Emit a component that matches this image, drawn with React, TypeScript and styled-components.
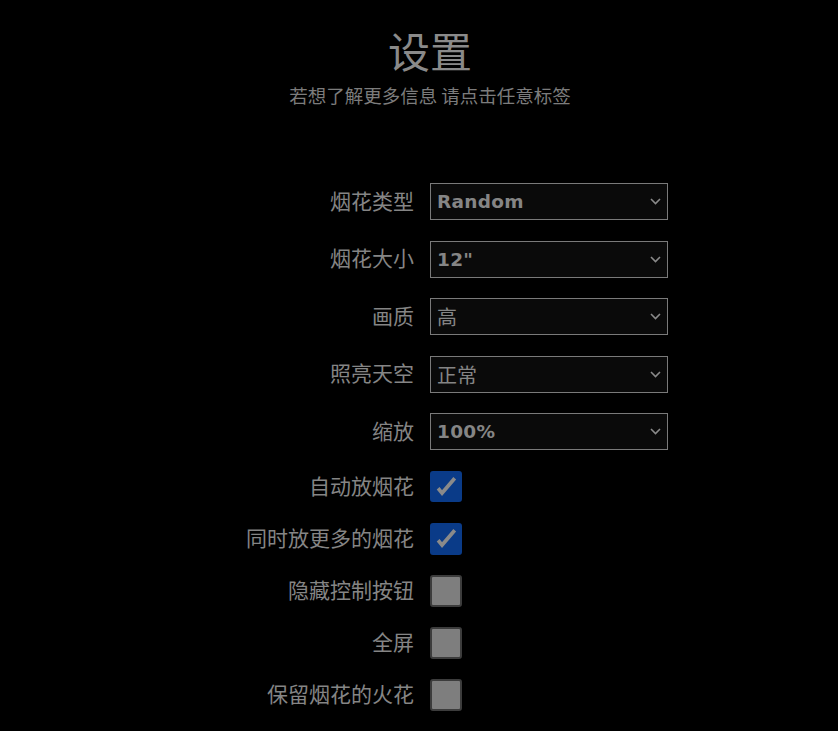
import React from "react";
import styled, { createGlobalStyle } from "styled-components";

const GlobalStyle = createGlobalStyle`
  html, body {
    margin: 0;
    padding: 0;
    background: #000;
  }
  body {
    font-family: "Noto Sans CJK SC", "Noto Sans", sans-serif;
    color: #858585;
  }
`;

const selects = [
  { label: "烟花类型", value: "Random", latin: true },
  { label: "烟花大小", value: '12"', latin: true },
  { label: "画质", value: "高", latin: false },
  { label: "照亮天空", value: "正常", latin: false },
  { label: "缩放", value: "100%", latin: true },
];

const toggles = [
  { label: "自动放烟花", checked: true },
  { label: "同时放更多的烟花", checked: true },
  { label: "隐藏控制按钮", checked: false },
  { label: "全屏", checked: false },
  { label: "保留烟花的火花", checked: false },
];

export default function App() {
  return (
    <>
      <GlobalStyle />
      <Page>
        <Header>
          <Title>设置</Title>
          <Subtitle>若想了解更多信息 请点击任意标签</Subtitle>
        </Header>
        <Form>
          {selects.map((s) => (
            <Row key={s.label}>
              <Label>{s.label}</Label>
              <Select>
                <SelectValue $latin={s.latin}>{s.value}</SelectValue>
                <svg width="11" height="7" viewBox="0 0 11 7">
                  <path d="M1 1 L5.5 5.5 L10 1" fill="none" stroke="#8a8a8a" strokeWidth="1.6" />
                </svg>
              </Select>
            </Row>
          ))}
          {toggles.map((t) => (
            <Row key={t.label}>
              <Label>{t.label}</Label>
              <Checkbox $checked={t.checked}>
                {t.checked && (
                  <svg width="32" height="31" viewBox="0 0 32 31">
                    <path
                      d="M7 17.5 L11.5 23 L26 6"
                      fill="none"
                      stroke="#8a8a8a"
                      strokeWidth="4.2"
                      strokeLinecap="butt"
                      strokeLinejoin="miter"
                    />
                  </svg>
                )}
              </Checkbox>
            </Row>
          ))}
        </Form>
      </Page>
    </>
  );
}

const Page = styled.div`
  width: 838px;
  min-height: 731px;
  background: #000;
`;

const Header = styled.header`
  display: flex;
  flex-direction: column;
  align-items: center;
  padding-top: 27px;
  padding-left: 22px;
`;

const Title = styled.h1`
  margin: 0;
  font-size: 42px;
  line-height: 46px;
  font-weight: 400;
  color: #8a8a8a;
`;

const Subtitle = styled.p`
  margin: 11px 0 0;
  font-size: 18.5px;
  line-height: 22px;
  color: #7c7c7c;
`;

const Form = styled.div`
  display: grid;
  grid-template-columns: 414px 238px;
  column-gap: 16px;
  row-gap: 20.6px;
  margin-top: 77px;
  align-items: center;
`;

const Row = styled.div`
  display: contents;
`;

const Label = styled.span`
  justify-self: end;
  font-size: 21px;
  line-height: 24px;
  padding-bottom: 4px;
  color: #858585;
`;

const Select = styled.div`
  box-sizing: border-box;
  height: 37px;
  display: flex;
  align-items: center;
  justify-content: space-between;
  padding: 0 6px;
  border: 1px solid #7a7a7a;
  background: #0a0a0a;
`;

const SelectValue = styled.span<{ $latin: boolean }>`
  font-family: ${(p) =>
    p.$latin ? '"DejaVu Sans", sans-serif' : '"Noto Sans CJK SC", sans-serif'};
  font-weight: ${(p) => (p.$latin ? 700 : 400)};
  font-size: ${(p) => (p.$latin ? "18.5px" : "20px")};
  letter-spacing: ${(p) => (p.$latin ? "0.3px" : "0")};
  color: #858585;
`;

const Checkbox = styled.div<{ $checked: boolean }>`
  box-sizing: border-box;
  width: 32px;
  height: 31.5px;
  border-radius: 3px;
  display: flex;
  align-items: center;
  justify-content: center;
  background: ${(p) => (p.$checked ? "#0a3b88" : "#7e7e7e")};
  border: 2px solid ${(p) => (p.$checked ? "#0a3b88" : "#3c3c3c")};
`;
